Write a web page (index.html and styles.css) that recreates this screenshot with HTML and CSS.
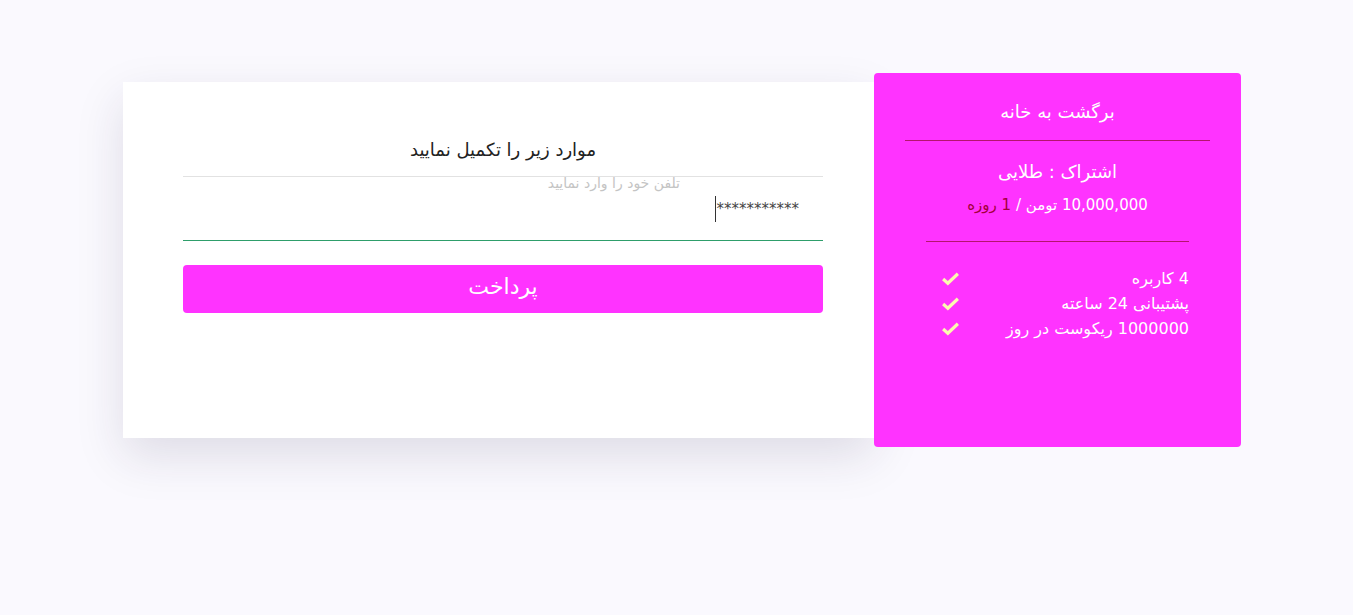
FILE: index.html
```html
<!DOCTYPE html>
<html lang="fa" dir="rtl">
<head>
    <meta charset="UTF-8">
    <meta name="viewport" content="width=device-width, initial-scale=1.0">
    <title>پرداخت اشتراک</title>
    <link rel="stylesheet" href="styles.css">
</head>
<body>
    <div class="checkout">
        <div class="plan">
            <a class="plan-home" href="#">برگشت به خانه</a>
            <hr class="plan-line">
            <h2 class="plan-name">اشتراک : طلایی</h2>
            <p class="plan-price">10,000,000 تومن / <span class="plan-period">1 روزه</span></p>
            <hr class="plan-line short">
            <ul class="plan-features">
                <li><span>4 کاربره</span><svg class="tick" viewBox="0 0 18 14"><path d="M2 7.5l4.5 4L16 2.5"/></svg></li>
                <li><span>پشتیبانی 24 ساعته</span><svg class="tick" viewBox="0 0 18 14"><path d="M2 7.5l4.5 4L16 2.5"/></svg></li>
                <li><span>1000000 ریکوست در روز</span><svg class="tick" viewBox="0 0 18 14"><path d="M2 7.5l4.5 4L16 2.5"/></svg></li>
            </ul>
        </div>

        <form class="pay-form" onsubmit="return false">
            <h1 class="pay-title">موارد زیر را تکمیل نمایید</h1>
            <div class="field">
                <label class="field-label" for="phone">تلفن خود را وارد نمایید</label>
                <div class="field-input" id="phone"><span class="caret"></span>***********</div>
            </div>
            <button class="pay-btn" type="submit">پرداخت</button>
        </form>
    </div>
</body>
</html>
```

FILE: styles.css
```css
body {
    margin: 0;
    padding: 0;
    font-family: 'DejaVu Sans', 'Noto Sans', sans-serif;
    background: #faf9fe;
    color: #222;
    height: 100vh;
    overflow: hidden;
}
.checkout {
    display: flex;
    align-items: center;
    width: 1118px;
    margin: 73px 112px 0 0;
}
.plan {
    width: 367px;
    height: 374px;
    box-sizing: border-box;
    background: #ff33ff;
    border-radius: 4px;
    color: #fff;
    text-align: center;
    padding: 24px 31px 0;
    position: relative;
    z-index: 1;
}
.plan-home {
    display: block;
    color: #fff;
    text-decoration: none;
    font-size: 18px;
    line-height: 30px;
}
.plan-line {
    border: none;
    border-top: 1px solid #b5146e;
    margin: 13px 0 0;
}
.plan-line.short {
    margin: 24px 21px 0;
}
.plan-name {
    font-weight: normal;
    font-size: 18px;
    line-height: 30px;
    margin: 16px 0 0;
}
.plan-price {
    font-size: 15px;
    line-height: 24px;
    margin: 6px 0 0;
}
.plan-period {
    color: #a3003c;
}
.plan-features {
    list-style: none;
    margin: 24px 21px 0;
    padding: 0;
}
.plan-features li {
    display: flex;
    justify-content: space-between;
    align-items: center;
    font-size: 16px;
    height: 25px;
}
.tick {
    width: 19px;
    height: 15px;
    margin-left: 15px;
    fill: none;
    stroke: #fbfbb0;
    stroke-width: 3;
}
.pay-form {
    width: 751px;
    height: 356px;
    box-sizing: border-box;
    background: #fff;
    padding: 53px 51px 0 60px;
    box-shadow: 0 18px 45px rgba(40, 30, 70, 0.13);
}
.pay-title {
    font-weight: normal;
    font-size: 18px;
    line-height: 30px;
    text-align: center;
    margin: 0 0 11px;
}
.field {
    border-top: 1px solid #e2e2e2;
    border-bottom: 1px solid #2e9e6b;
    height: 63px;
    position: relative;
}
.field-label {
    position: absolute;
    top: 0;
    right: 143px;
    font-size: 14px;
    line-height: 13px;
    color: #c4c4c4;
}
.field-input {
    display: flex;
    align-items: center;
    justify-content: flex-end;
    margin: 19px 24px 0 0;
    height: 26px;
    font-size: 15px;
    color: #444;
    direction: ltr;
}
.caret {
    display: inline-block;
    width: 1px;
    height: 26px;
    background: #333;
    margin-right: 1px;
}
.pay-btn {
    display: block;
    width: 100%;
    height: 48px;
    margin-top: 24px;
    padding: 0 0 6px;
    border: none;
    border-radius: 4px;
    background: #ff33ff;
    color: #fff;
    font-family: inherit;
    font-size: 22px;
    cursor: pointer;
}
```
